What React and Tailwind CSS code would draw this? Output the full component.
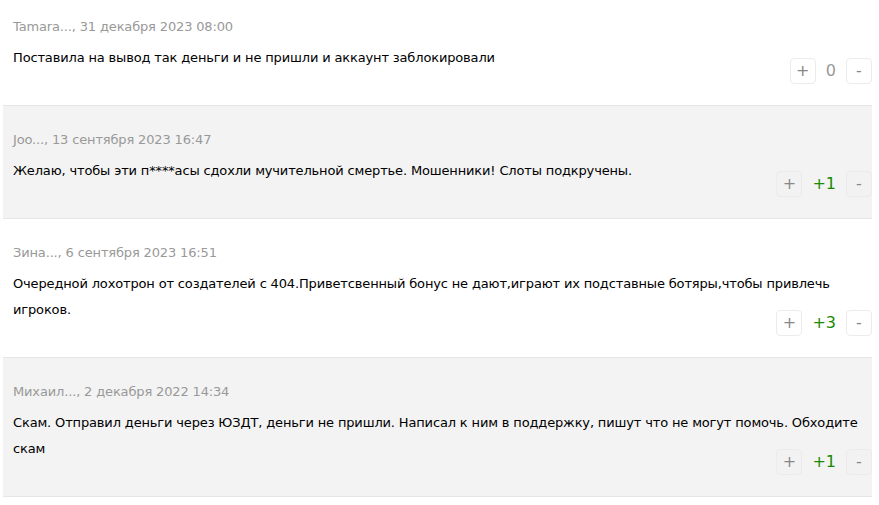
const comments = [
  {
    author: "Tamara...",
    date: "31 декабря 2023 08:00",
    text: "Поставила на вывод так деньги и не пришли и аккаунт заблокировали",
    score: 0,
  },
  {
    author: "Joo...",
    date: "13 сентября 2023 16:47",
    text: "Желаю, чтобы эти п****асы сдохли мучительной смертье. Мошенники! Слоты подкручены.",
    score: 1,
  },
  {
    author: "Зина...",
    date: "6 сентября 2023 16:51",
    text: "Очередной лохотрон от создателей с 404.Приветсвенный бонус не дают,играют их подставные ботяры,чтобы привлечь игроков.",
    score: 3,
  },
  {
    author: "Михаил...",
    date: "2 декабря 2022 14:34",
    text: "Скам. Отправил деньги через ЮЗДТ, деньги не пришли. Написал к ним в поддержку, пишут что не могут помочь. Обходите скам",
    score: 1,
  },
];

function Vote({ score, gray }) {
  const box = gray
    ? "flex h-[26px] w-[26px] items-center justify-center rounded-[4px] border border-[#ebebeb] bg-[#f2f2f2] text-[16px] text-[#888]"
    : "flex h-[26px] w-[26px] items-center justify-center rounded-[4px] border border-[#ececec] bg-white text-[16px] text-[#888]";
  return (
    <div className="mt-[-13px] flex items-center justify-end gap-[10px]">
      <div className={box}>+</div>
      <span className={score > 0 ? "text-[16px] text-[#1a8a00]" : "text-[16px] text-[#999]"}>
        {score > 0 ? "+" + score : score}
      </span>
      <div className={box}>-</div>
    </div>
  );
}

export default function App() {
  return (
    <div className="min-h-screen bg-white font-['DejaVu_Sans',sans-serif]">
      <div className="ml-[3px] w-[869px]">
        {comments.map((c, i) => {
          const gray = i % 2 === 1;
          return (
            <div
              key={i}
              className={
                (gray ? "bg-[#f3f3f3] " : "bg-white ") +
                (i === 0 ? "pt-[14px] " : "pt-[21px] ") +
                "border-b border-[#e6e6e6] pb-[21px] pl-[10px]"
              }
            >
              <div className="text-[13px] leading-[26px] tracking-[-0.15px] text-[#999]">
                {c.author}, {c.date}
              </div>
              <p className="mt-[5px] pr-[10px] text-[13px] leading-[26px] tracking-[-0.15px] text-black">
                {c.text}
              </p>
              <Vote score={c.score} gray={gray} />
            </div>
          );
        })}
      </div>
    </div>
  );
}
